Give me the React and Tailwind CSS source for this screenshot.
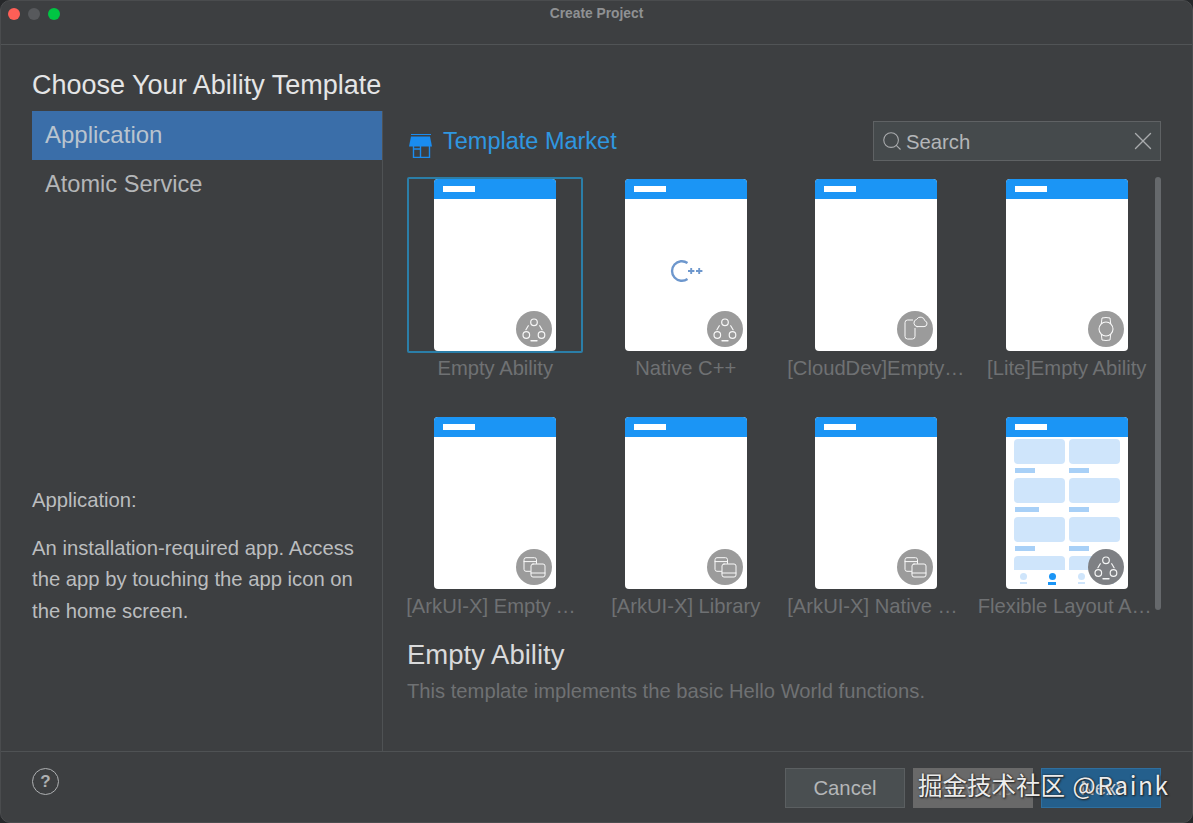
import React from "react";
import { Search, X } from "lucide-react";

const S = { fill: "none", stroke: "#fff", strokeWidth: 1, strokeLinecap: "round", strokeLinejoin: "round" };

function Triad() {
  return (
    <svg width="36" height="36" viewBox="0 0 36 36" {...S} strokeWidth="1.2" opacity="0.92">
      <circle cx="18" cy="11.3" r="3.3" />
      <circle cx="10.3" cy="24" r="3.3" />
      <circle cx="25.5" cy="24" r="3.3" />
      <path d="M12.3 14.7 L9.9 18.8" />
      <path d="M23.7 14.7 L26.1 18.8" />
      <path d="M15 29.7 H21" strokeWidth="1.4" />
    </svg>
  );
}
function PhoneCloud() {
  return (
    <svg width="36" height="36" viewBox="0 0 36 36" {...S} opacity="0.95">
      <path d="M15.6 9 H10.6 a2.6 2.6 0 0 0 -2.6 2.6 V25.4 A2.6 2.6 0 0 0 10.6 28 H15.4 A2.6 2.6 0 0 0 18 25.4 V17.4" />
      <path d="M20 15.6 H27 A3 3 0 0 0 27.8 9.7 A4.4 4.4 0 0 0 19.6 8.4 A3.7 3.7 0 0 0 20 15.6 Z" />
    </svg>
  );
}
function Watch() {
  return (
    <svg width="36" height="36" viewBox="0 0 36 36" {...S} opacity="0.95">
      <circle cx="18" cy="18" r="7" strokeWidth="1.1" />
      <path d="M13.3 12.6 L14 7 Q18 6 22 7 L22.7 12.6" />
      <path d="M13.3 23.4 L14 29 Q18 30 22 29 L22.7 23.4" />
    </svg>
  );
}
function Copy() {
  return (
    <svg width="36" height="36" viewBox="0 0 36 36" {...S} opacity="0.95">
      <path d="M14.5 22.3 H10 a2 2 0 0 1 -2 -2 V10.7 a2 2 0 0 1 2 -2 H18.5 a2 2 0 0 1 2 2 V14.4" />
      <path d="M8 12.6 H20.4" />
      <rect x="15" y="15" width="14" height="13" rx="2" />
      <path d="M15 24 H29" />
    </svg>
  );
}
function StoreIcon() {
  return (
    <svg width="23" height="24" viewBox="0 0 23 24" className="shrink-0 relative top-[5px]">
      <path d="M2 0.5 H22" stroke="#1a8cf0" strokeWidth="1" />
      <path d="M2 2.5 H21 L23 12.5 H0 Z" fill="#1a8cf0" />
      <path d="M4.5 12 V23.5 H20.5 V12" fill="none" stroke="#1a8cf0" strokeWidth="1.4" />
      <path d="M11.5 15 H4.5 M11.5 12 V23.5" fill="none" stroke="#1a8cf0" strokeWidth="1.4" />
    </svg>
  );
}
function CppIcon() {
  return (
    <svg width="36" height="26" viewBox="0 0 36 26">
      <path d="M18.5 5 A9.8 9.8 0 1 0 18.5 21" fill="none" stroke="#6d97cd" strokeWidth="2.4" />
      <path d="M19 13 H25.4 M22.2 10 V16 M27 13 H33.4 M30.2 10 V16" fill="none" stroke="#6d97cd" strokeWidth="1.9" />
    </svg>
  );
}

function FlexThumb() {
  const rows = [20, 24, 20];
  return (
    <div className="flex-1 flex flex-col min-h-0">
      <div className="flex-1 min-h-0 overflow-hidden grid grid-cols-2 gap-x-1 pl-2 pr-2 pt-[2px] content-start">
        {rows.map((w, i) => (
          <React.Fragment key={i}>
            <div className="h-[39px]">
              <div className="h-[25px] rounded-[4px] bg-[#cfe5fb]" />
              {i === 1 ? <div className="mt-1 ml-px h-[5px] w-6 bg-[#a8d0f7]" /> : <div className="mt-1 ml-px h-[5px] w-5 bg-[#a8d0f7]" />}
            </div>
            <div className="h-[39px]">
              <div className="h-[25px] rounded-[4px] bg-[#cfe5fb]" />
              <div className="mt-1 h-[5px] w-5 bg-[#a8d0f7]" />
            </div>
          </React.Fragment>
        ))}
        <div className="h-[25px] rounded-[4px] bg-[#cfe5fb]" />
        <div className="h-[25px] rounded-[4px] bg-[#cfe5fb]" />
      </div>
      <div className="h-[19px] shrink-0 flex justify-around px-[3px] pt-[3px]">
        {[0, 1, 2, 3].map((i) => (
          <div key={i} className="flex flex-col items-center gap-[2px]">
            <div className={i === 1 ? "w-[7px] h-[7px] rounded-full bg-[#1b95f5]" : "w-[7px] h-[7px] rounded-full bg-[#cfe5fb]"} />
            <div className={i === 1 ? "w-[8px] h-[3px] bg-[#1b95f5]" : "w-[7px] h-[2px] bg-[#cfe5fb]"} />
          </div>
        ))}
      </div>
    </div>
  );
}

function Tile({ label, Icon, selected, cpp, flex }) {
  return (
    <div className="flex flex-col items-center">
      <div className={selected ? "w-[176px] h-[176px] border-2 border-[#2b7ea8] rounded-[2px] flex justify-center" : "w-[176px] h-[176px] border-2 border-transparent flex justify-center"}>
        <div className="relative w-[122px] h-[172px] bg-white rounded-[4px] overflow-hidden flex flex-col">
          <div className="h-5 shrink-0 bg-[#1b95f5] pl-[9px] pt-[7px]">
            <div className="w-8 h-[6px] bg-white" />
          </div>
          {flex && <FlexThumb />}
          {cpp && (
            <div className="flex-1 flex items-start justify-center pl-[2px] pt-[59px]">
              <CppIcon />
            </div>
          )}
          <div className={flex ? "absolute right-1 bottom-1 w-9 h-9 rounded-full bg-[#7e8084] flex items-center justify-center" : "absolute right-1 bottom-1 w-9 h-9 rounded-full bg-[#9b9b9b] flex items-center justify-center"}>
            <Icon />
          </div>
        </div>
      </div>
      <div className="mt-[3px] w-[178px] text-center text-[20.2px] leading-6 text-[#6f7173] truncate">{label}</div>
    </div>
  );
}

const tiles = [
  { label: "Empty Ability", Icon: Triad, selected: true },
  { label: "Native C++", Icon: Triad, cpp: true },
  { label: "[CloudDev]Empty Ability", Icon: PhoneCloud },
  { label: "[Lite]Empty Ability", Icon: Watch },
  { label: "[ArkUI-X] Empty Ability", Icon: Copy },
  { label: "[ArkUI-X] Library", Icon: Copy },
  { label: "[ArkUI-X] Native C++", Icon: Copy },
  { label: "Flexible Layout Ability", Icon: Triad, flex: true },
];

export default function App() {
  return (
    <div className="relative w-[1193px] h-[823px] bg-[#26282a] overflow-hidden" style={{ fontFamily: '"Liberation Sans", Arial, sans-serif' }}>
      <div className="w-full h-full rounded-[10px] bg-[#3d3f41] border border-[#4a4c4e] flex flex-col overflow-hidden">
        {/* title bar */}
        <div className="relative h-[44px] shrink-0 border-b border-[#515456] flex items-start justify-center pt-[5px]">
          <div className="absolute left-[7px] top-[7px] flex gap-2">
            <div className="w-3 h-3 rounded-full bg-[#ff5f57]" />
            <div className="w-3 h-3 rounded-full bg-[#57595c]" />
            <div className="w-3 h-3 rounded-full bg-[#00c543]" />
          </div>
          <div className="text-[13.8px] leading-4 font-bold text-[#8f9193]">Create Project</div>
        </div>

        {/* heading */}
        <div className="h-[66px] shrink-0 pl-[31px] pt-[24px]">
          <h1 className="text-[27px] leading-[32px] text-[#e4e5e6]">Choose Your Ability Template</h1>
        </div>

        {/* main */}
        <div className="flex-1 min-h-0 flex">
          <div className="w-[351px] ml-[31px] shrink-0 border-r border-[#4f5254] flex flex-col justify-between pb-[124px]">
            <div>
              <div className="h-[49px] bg-[#3a6ea9] pl-[13px] pb-[2px] flex items-center text-[24px] text-[#b9c4cf]">Application</div>
              <div className="h-[49px] pl-[13px] flex items-center text-[23.6px] text-[#b4b6b8]">Atomic Service</div>
            </div>
            <div className="w-[335px] text-[20.25px] text-[#bbbdbf]">
              <p className="leading-6 mb-[21px]">Application:</p>
              <p className="leading-[31.5px]">An installation-required app. Access the app by touching the app icon on the home screen.</p>
            </div>
          </div>

          <div className="flex-1 min-w-0 pl-6 pr-[31px] pt-[10px]">
            <div className="h-[40px] flex items-center justify-between">
              <div className="flex items-center gap-[11px] pl-[2px]">
                <StoreIcon />
                <span className="text-[23.5px] text-[#2f97e0] relative top-[1px]">Template Market</span>
              </div>
              <div className="w-[288px] h-10 border border-[#5f6264] bg-[#454a4c] flex items-center pl-[7px] pr-[2px]">
                <Search size={22} strokeWidth={1.2} className="text-[#a9abad] shrink-0" />
                <span className="ml-[3px] text-[20.3px] text-[#b4b6b8] flex-1 relative top-[1px]">Search</span>
                <X size={30} strokeWidth={1.1} className="text-[#a9abad] shrink-0" />
              </div>
            </div>

            <div className="relative mt-[16px] h-[433px]">
              <div className="w-[762px] -ml-[7px] grid grid-cols-4 gap-y-[35px]">
                {tiles.map((t) => (
                  <Tile key={t.label} {...t} />
                ))}
              </div>
              <div className="absolute right-0 top-0 w-[6px] h-[433px] rounded-[3px] bg-[#66696c]" />
            </div>

            <h2 className="mt-[29px] text-[27.5px] leading-8 text-[#d9dadb]">Empty Ability</h2>
            <p className="mt-[8px] text-[20.2px] leading-6 text-[#6f7173]">This template implements the basic Hello World functions.</p>
          </div>
        </div>

        {/* footer */}
        <div className="h-[71px] shrink-0 border-t border-[#4f5254] flex items-start justify-between pl-[31px] pr-[31px] pt-[16px]">
          <div className="w-[27px] h-[27px] rounded-full border-[1.5px] border-[#aeb0b2] flex items-center justify-center text-[17px] font-bold text-[#aeb0b2]">?</div>
          <div className="flex gap-2">
            <div className="w-[120px] h-10 border border-[#5b5f61] bg-[#4a4f51] flex items-center justify-center text-[20.3px] text-[#b4b6b8]">Cancel</div>
            <div className="w-[120px] h-10 bg-[#696969] flex items-center justify-center text-[20.3px] text-[#8a8a8a]">Previous</div>
            <div className="w-[120px] h-10 border border-[#2f6f9f] bg-[#245f8c] flex items-center justify-center text-[20.3px] text-[#d5dde4]">Next</div>
          </div>
        </div>
      </div>

      {/* watermark */}
      <div
        className="absolute left-[918px] top-[767px] whitespace-nowrap text-[24.5px] leading-9 text-[#ececec] [text-shadow:0_0_2px_#222,1px_1px_2px_#222]"
        style={{ fontFamily: '"Noto Sans CJK SC", "Liberation Sans", sans-serif' }}
      >
        掘金技术社区 <span className="ml-[2px] tracking-[1.6px]">@Raink</span>
      </div>
    </div>
  );
}
